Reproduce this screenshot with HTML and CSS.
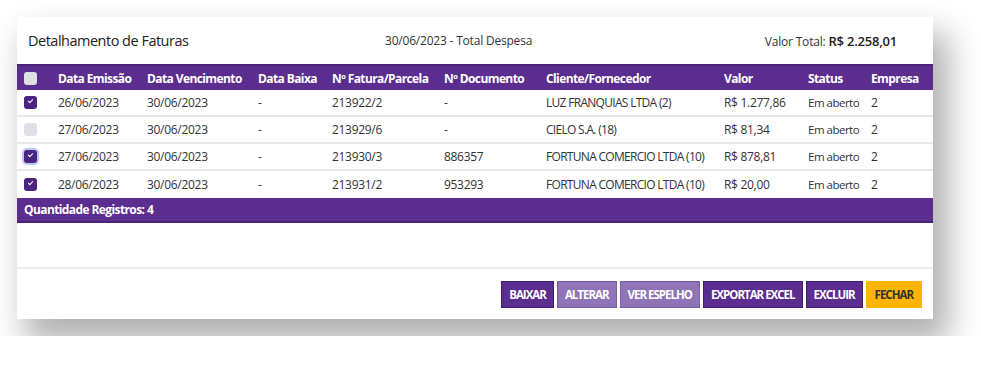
FILE: index.html
```html
<!DOCTYPE html>
<html lang="pt-br">
<head>
    <meta charset="UTF-8">
    <title>Detalhamento de Faturas</title>
    <link rel="stylesheet" href="styles.css">
</head>
<body>

    <div class="painel">
        <div class="painel-topo">
            <h2>Detalhamento de Faturas</h2>
            <span class="periodo">30/06/2023 - Total Despesa</span>
            <span class="total">Valor Total: <b>R$ 2.258,01</b></span>
        </div>

        <table class="faturas">
            <colgroup>
                <col class="c-check">
                <col class="c-emissao">
                <col class="c-vencimento">
                <col class="c-baixa">
                <col class="c-fatura">
                <col class="c-documento">
                <col class="c-cliente">
                <col class="c-valor">
                <col class="c-status">
                <col>
            </colgroup>
            <thead>
                <tr>
                    <th><span class="check"></span></th>
                    <th>Data Emissão</th>
                    <th>Data Vencimento</th>
                    <th>Data Baixa</th>
                    <th>Nº Fatura/Parcela</th>
                    <th>Nº Documento</th>
                    <th>Cliente/Fornecedor</th>
                    <th>Valor</th>
                    <th>Status</th>
                    <th>Empresa</th>
                </tr>
            </thead>
            <tbody>
                <tr>
                    <td><span class="check marcado"></span></td>
                    <td>26/06/2023</td>
                    <td>30/06/2023</td>
                    <td>-</td>
                    <td>213922/2</td>
                    <td>-</td>
                    <td class="cliente">LUZ FRANQUIAS LTDA (2)</td>
                    <td>R$ 1.277,86</td>
                    <td class="status">Em aberto</td>
                    <td>2</td>
                </tr>
                <tr>
                    <td><span class="check"></span></td>
                    <td>27/06/2023</td>
                    <td>30/06/2023</td>
                    <td>-</td>
                    <td>213929/6</td>
                    <td>-</td>
                    <td class="cliente">CIELO S.A. (18)</td>
                    <td>R$ 81,34</td>
                    <td class="status">Em aberto</td>
                    <td>2</td>
                </tr>
                <tr>
                    <td><span class="check marcado foco"></span></td>
                    <td>27/06/2023</td>
                    <td>30/06/2023</td>
                    <td>-</td>
                    <td>213930/3</td>
                    <td>886357</td>
                    <td class="cliente">FORTUNA COMERCIO LTDA (10)</td>
                    <td>R$ 878,81</td>
                    <td class="status">Em aberto</td>
                    <td>2</td>
                </tr>
                <tr>
                    <td><span class="check marcado"></span></td>
                    <td>28/06/2023</td>
                    <td>30/06/2023</td>
                    <td>-</td>
                    <td>213931/2</td>
                    <td>953293</td>
                    <td class="cliente">FORTUNA COMERCIO LTDA (10)</td>
                    <td>R$ 20,00</td>
                    <td class="status">Em aberto</td>
                    <td>2</td>
                </tr>
            </tbody>
        </table>

        <div class="rodape-tabela">Quantidade Registros: 4</div>

        <div class="espaco"></div>

        <div class="acoes">
            <button class="btn">BAIXAR</button>
            <button class="btn claro">ALTERAR</button>
            <button class="btn claro">VER ESPELHO</button>
            <button class="btn">EXPORTAR EXCEL</button>
            <button class="btn">EXCLUIR</button>
            <button class="btn amarelo">FECHAR</button>
        </div>
    </div>

</body>
</html>
```

FILE: styles.css
```css
body {
    font-family: "Open Sans", Arial, sans-serif;
    background-color: #fff;
    margin: 0;
    padding: 17px;
    color: #333;
}
.painel {
    width: 916px;
    background-color: white;
    box-shadow: 12px 20px 30px 4px rgba(0, 0, 0, 0.3);
}
.painel-topo {
    display: flex;
    align-items: center;
    height: 47px;
    padding: 0 36px 0 11px;
}
.painel-topo h2 {
    font-size: 14.5px;
    font-weight: normal;
    margin: 0;
    width: 357px;
    letter-spacing: -0.5px;
    color: #222;
}
.periodo {
    font-size: 12px;
    letter-spacing: -0.2px;
}
.total {
    margin-left: auto;
    font-size: 12px;
    letter-spacing: -0.2px;
}
.total b {
    font-size: 13px;
    font-weight: 600;
    color: #222;
}
.faturas {
    width: 100%;
    border-collapse: collapse;
    table-layout: fixed;
    font-size: 12px;
    letter-spacing: -0.3px;
}
.c-check { width: 34px; }
.c-emissao { width: 89px; }
.c-vencimento { width: 111px; }
.c-baixa { width: 74px; }
.c-fatura { width: 112px; }
.c-documento { width: 102px; }
.c-cliente { width: 178px; }
.c-valor { width: 84px; }
.c-status { width: 63px; }
.faturas th {
    background-color: #5b2d8e;
    color: white;
    text-align: left;
    font-weight: bold;
    height: 24px;
    padding: 0 0 0 7px;
    border-top: 2px solid #4a2277;
    white-space: nowrap;
    letter-spacing: -0.6px;
}
.faturas td {
    height: 25px;
    padding: 0 0 0 7px;
    border-bottom: 2px solid #e8e8e8;
    white-space: nowrap;
    color: #333;
}
.faturas tbody tr:last-child td {
    border-bottom: none;
    height: 27px;
}
.faturas .cliente {
    letter-spacing: -0.7px;
}
.faturas .status {
    font-size: 11.5px;
    letter-spacing: -0.5px;
}
.check {
    display: block;
    width: 13px;
    height: 13px;
    border-radius: 3px;
    background-color: #dfe0e6;
    position: relative;
}
.check.marcado {
    background-color: #4b2380;
}
.check.marcado::after {
    content: "";
    position: absolute;
    left: 4px;
    top: 3px;
    width: 4px;
    height: 2px;
    border-left: 1.5px solid white;
    border-bottom: 1.5px solid white;
    transform: rotate(-45deg);
}
.check.foco {
    box-shadow: 0 0 0 2px #b9c9f0;
}
.rodape-tabela {
    background-color: #5b2d8e;
    color: white;
    font-size: 12px;
    font-weight: bold;
    letter-spacing: -0.6px;
    height: 23px;
    line-height: 23px;
    padding-left: 7px;
    border-bottom: 2px solid #4a2277;
}
.espaco {
    height: 44px;
    border-bottom: 2px solid #ededed;
}
.acoes {
    display: flex;
    justify-content: flex-end;
    gap: 3px;
    padding: 12px 11px 11px 0;
}
.btn {
    font-family: "Open Sans", Arial, sans-serif;
    font-size: 11.5px;
    font-weight: bold;
    letter-spacing: -1px;
    color: white;
    background-color: #5b2d8e;
    border: 1px solid #3f1b6b;
    height: 27px;
    padding: 0 7px;
}
.btn.claro {
    background-color: #9074b8;
    border-color: #7a5ca6;
}
.btn.amarelo {
    background-color: #ffb400;
    border-color: #ffb400;
    color: #333;
    padding: 0 8px;
}
```
